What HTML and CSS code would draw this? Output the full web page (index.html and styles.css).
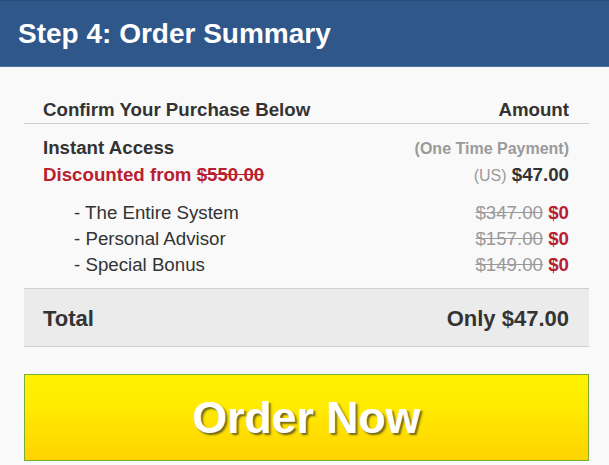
FILE: index.html
```html
<!DOCTYPE html>
<html>
<head>
<meta charset="utf-8">
<link rel="stylesheet" href="styles.css">
</head>
<body>
<header class="bar">
  <h1 class="bar-title">Step 4: Order Summary</h1>
</header>
<main class="summary">
  <div class="row head-row">
    <span>Confirm Your Purchase Below</span>
    <span>Amount</span>
  </div>
  <div class="body">
    <div class="group">
      <div class="row">
        <span class="strong">Instant Access</span>
        <span class="muted-bold">(One Time Payment)</span>
      </div>
      <div class="row">
        <span class="red strong">Discounted from <s>$550.00</s></span>
        <span><span class="muted">(US)</span> <span class="strong">$47.00</span></span>
      </div>
    </div>
    <div class="group items">
      <div class="row item">
        <span>- The Entire System</span>
        <span><s class="muted">$347.00</s> <span class="red strong">$0</span></span>
      </div>
      <div class="row item">
        <span>- Personal Advisor</span>
        <span><s class="muted">$157.00</s> <span class="red strong">$0</span></span>
      </div>
      <div class="row item">
        <span>- Special Bonus</span>
        <span><s class="muted">$149.00</s> <span class="red strong">$0</span></span>
      </div>
    </div>
  </div>
  <div class="row total">
    <span>Total</span>
    <span>Only $47.00</span>
  </div>
  <button class="order">Order Now</button>
</main>
</body>
</html>
```
FILE: styles.css
```css
* { box-sizing: border-box; }
body {
  margin: 0;
  background: #f9f9f9;
  font-family: "Liberation Sans", Arial, sans-serif;
  color: #333;
}
.bar {
  height: 67px;
  background: #30578a;
  border-top: 1px solid #284b7a;
  border-bottom: 1px solid #4a78aa;
  display: flex;
  align-items: center;
  padding-left: 18px;
}
.bar-title {
  margin: 0;
  font-size: 28px;
  line-height: 28px;
  font-weight: bold;
  color: #fff;
}
.summary {
  padding: 30px 20px 0 24px;
}
.row {
  display: flex;
  justify-content: space-between;
  align-items: baseline;
  padding: 0 20px 0 19px;
  font-size: 18.7px;
  line-height: 26px;
}
.head-row {
  font-weight: bold;
  border-bottom: 1px solid #cfcfcf;
}
.body {
  padding: 11px 0 10px;
  display: flex;
  flex-direction: column;
  gap: 11px;
}
.item { padding-left: 50px; }
.strong { font-weight: bold; }
.red { color: #b8202f; }
.muted { color: #9a9a9a; }
.row .muted:not(s) { font-size: 16px; }
.muted-bold { color: #9a9a9a; font-weight: bold; font-size: 16px; }
.total {
  background: #ebebeb;
  border-top: 1px solid #cfcfcf;
  border-bottom: 1px solid #cfcfcf;
  padding-top: 17px;
  padding-bottom: 14px;
  font-size: 22px;
  font-weight: bold;
}
.order {
  display: block;
  width: 100%;
  margin-top: 27px;
  height: 87px;
  border: 1px solid #79ad34;
  background: linear-gradient(to bottom, #fff200 0%, #ffec00 35%, #ffd200 100%);
  font-family: "Liberation Sans", Arial, sans-serif;
  font-size: 44.6px;
  line-height: 85px;
  font-weight: bold;
  color: #fff;
  text-shadow: 2px 2px 2px rgba(60, 60, 40, 0.75);
  padding: 0;
  cursor: pointer;
}
```
